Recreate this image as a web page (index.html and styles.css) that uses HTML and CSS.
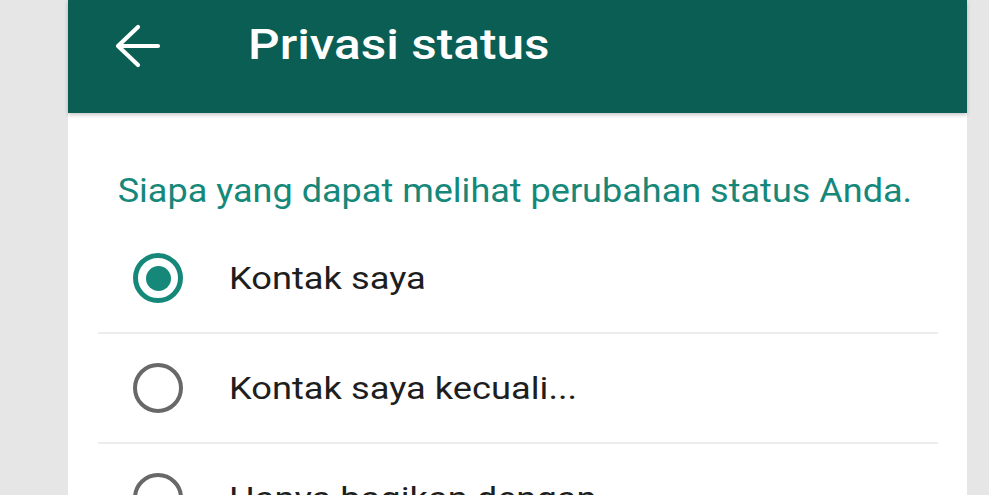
FILE: index.html
```html
<!DOCTYPE html>
<html lang="id">
<head>
<meta charset="utf-8">
<title>Privasi status</title>
<link rel="stylesheet" href="styles.css">
</head>
<body>
<div class="panel">
  <header class="appbar">
    <svg class="back" width="48" height="44" viewBox="0 0 48 44" aria-hidden="true">
      <path d="M4 22 H44 M24 3 L4 22 L24 41" fill="none" stroke="#fff" stroke-width="4.2" stroke-linecap="round" stroke-linejoin="round"/>
    </svg>
    <h1 class="title">Privasi status</h1>
  </header>
  <main class="content">
    <p class="subtitle">Siapa yang dapat melihat perubahan status Anda.</p>
    <ul class="options">
      <li class="option"><span class="radio checked"></span><span class="label">Kontak saya</span></li>
      <li class="option"><span class="radio"></span><span class="label">Kontak saya kecuali...</span></li>
      <li class="option"><span class="radio"></span><span class="label">Hanya bagikan dengan...</span></li>
    </ul>
  </main>
</div>
</body>
</html>
```
FILE: styles.css
```css
html, body {
  margin: 0;
  padding: 0;
  height: 100%;
  overflow: hidden;
}
body {
  background: #e6e6e6;
  font-family: Roboto, "Noto Sans", Arial, sans-serif;
}
.panel {
  margin-left: 68px;
  width: 899px;
  height: 100%;
  background: #fff;
}
.appbar {
  height: 113px;
  background: #0a5e53;
  display: flex;
  align-items: flex-start;
  box-shadow: 0 2px 4px rgba(0,0,0,0.22);
  position: relative;
}
.back {
  margin: 24px 0 0 46px;
  flex: none;
}
.title {
  margin: 24px 0 0 86px;
  color: #fff;
  font-size: 42px;
  line-height: 42px;
  font-weight: 500;
  white-space: nowrap;
  transform: scaleX(1.18);
  transform-origin: left center;
}
.content {
  padding: 0 29px 0 30px;
}
.subtitle {
  margin: 0 0 9px;
  padding: 54px 0 0 18px;
  color: #15887a;
  font-size: 33px;
  line-height: 48px;
  white-space: nowrap;
  transform: scaleX(1.092);
  transform-origin: left center;
}
.options {
  list-style: none;
  margin: 0;
  padding: 0;
}
.option {
  height: 108px;
  border-bottom: 2px solid #ececec;
  display: flex;
  align-items: center;
  padding-left: 35px;
}
.radio {
  width: 42px;
  height: 42px;
  border: 4px solid #686868;
  border-radius: 50%;
  flex: none;
  display: flex;
  align-items: center;
  justify-content: center;
}
.radio.checked {
  width: 40px;
  height: 40px;
  border: 5px solid #15887a;
}
.radio.checked::after {
  content: "";
  width: 25px;
  height: 25px;
  border-radius: 50%;
  background: #15887a;
}
.label {
  margin-left: 46px;
  font-size: 31px;
  color: #1e1e1e;
  white-space: nowrap;
  transform: scaleX(1.17);
  transform-origin: left center;
}
```
